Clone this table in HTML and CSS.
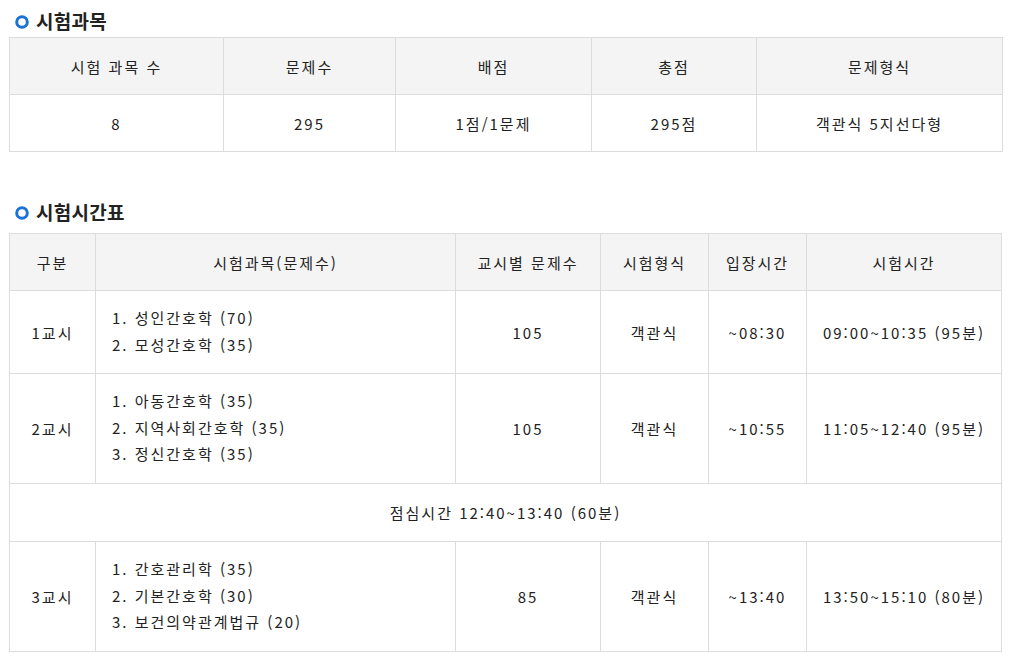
FILE: index.html
```html
<!DOCTYPE html>
<html lang="ko">
<head>
<meta charset="utf-8">
<link rel="stylesheet" href="styles.css">
</head>
<body>
<div class="page">
  <h3 class="title"><svg class="dot" width="16" height="16" viewBox="0 0 16 16"><circle cx="8" cy="8" r="5.3" fill="none" stroke="#1b72d8" stroke-width="3"/></svg>시험과목</h3>
  <table class="tbl t1">
    <colgroup><col style="width:214px"><col style="width:172px"><col style="width:196px"><col style="width:165px"><col></colgroup>
    <thead>
      <tr><th>시험 과목 수</th><th>문제수</th><th>배점</th><th>총점</th><th>문제형식</th></tr>
    </thead>
    <tbody>
      <tr><td>8</td><td>295</td><td>1점/1문제</td><td>295점</td><td>객관식 5지선다형</td></tr>
    </tbody>
  </table>

  <h3 class="title second"><svg class="dot" width="16" height="16" viewBox="0 0 16 16"><circle cx="8" cy="8" r="5.3" fill="none" stroke="#1b72d8" stroke-width="3"/></svg>시험시간표</h3>
  <table class="tbl t2">
    <colgroup><col style="width:86px"><col style="width:360px"><col style="width:145px"><col style="width:108px"><col style="width:98px"><col></colgroup>
    <thead>
      <tr><th>구분</th><th>시험과목(문제수)</th><th>교시별 문제수</th><th>시험형식</th><th>입장시간</th><th>시험시간</th></tr>
    </thead>
    <tbody>
      <tr class="r1">
        <td>1교시</td>
        <td class="subj"><ol><li>1. 성인간호학 (70)</li><li>2. 모성간호학 (35)</li></ol></td>
        <td>105</td><td>객관식</td><td>~08:30</td><td>09:00~10:35 (95분)</td>
      </tr>
      <tr class="r2">
        <td>2교시</td>
        <td class="subj"><ol><li>1. 아동간호학 (35)</li><li>2. 지역사회간호학 (35)</li><li>3. 정신간호학 (35)</li></ol></td>
        <td>105</td><td>객관식</td><td>~10:55</td><td>11:05~12:40 (95분)</td>
      </tr>
      <tr class="lunch">
        <td colspan="6">점심시간 12:40~13:40 (60분)</td>
      </tr>
      <tr class="r2">
        <td>3교시</td>
        <td class="subj"><ol><li>1. 간호관리학 (35)</li><li>2. 기본간호학 (30)</li><li>3. 보건의약관계법규 (20)</li></ol></td>
        <td>85</td><td>객관식</td><td>~13:40</td><td>13:50~15:10 (80분)</td>
      </tr>
    </tbody>
  </table>
</div>
</body>
</html>
```

FILE: styles.css
```css
html, body {
  margin: 0;
  padding: 0;
  background: #fff;
}
body {
  font-family: "Noto Sans CJK KR", "Noto Sans", sans-serif;
  color: #222;
}
.page {
  padding: 0 0 0 9px;
  width: 993px;
}
.title {
  margin: 0;
  height: 37px;
  padding-top: 8px;
  box-sizing: border-box;
  display: flex;
  align-items: flex-start;
  font-size: 19px;
  font-weight: bold;
  line-height: 26px;
  color: #222;
  letter-spacing: 0.3px;
}
.title.second {
  margin-top: 47px;
  height: 34px;
  padding-top: 0;
}
.dot {
  margin: 6px 6px 0 5px;
  flex: none;
}
.tbl {
  border-collapse: collapse;
  table-layout: fixed;
  font-size: 15px;
  letter-spacing: 2px;
  color: #222;
}
.t1 { width: 994px; }
.t2 { width: 993px; }
.tbl th, .tbl td {
  border: 1px solid #dcdcdc;
  text-align: center;
  vertical-align: middle;
  padding: 0;
  font-weight: normal;
}
.tbl th {
  background: #f4f4f4;
  height: 56px;
}
.t1 td { height: 56px; }
.t2 .r1 td { height: 82px; }
.t2 .r2 td { height: 109px; }
.t2 .lunch td { height: 57px; }
.tbl td.subj {
  text-align: left;
}
.subj ol {
  list-style: none;
  margin: 0;
  padding: 0 0 1px 16px;
}
.subj li {
  line-height: 26.5px;
}
```
